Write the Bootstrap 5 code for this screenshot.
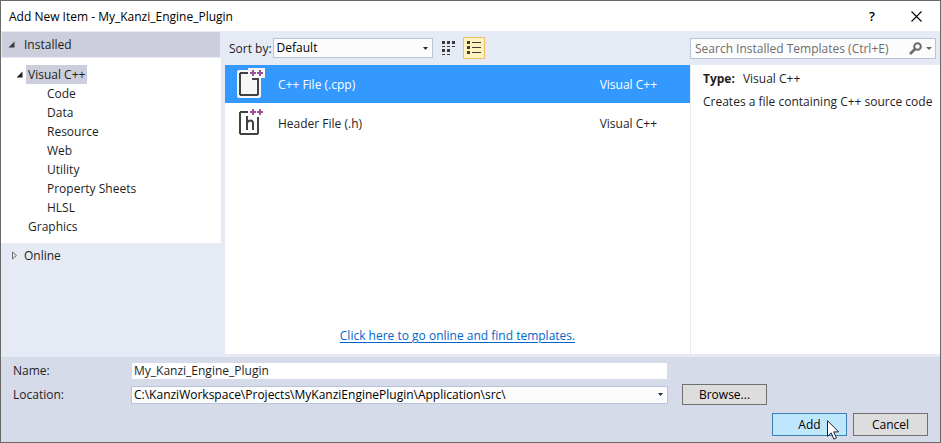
<!DOCTYPE html>
<html lang="en">
<head>
<meta charset="utf-8">
<meta name="viewport" content="width=device-width, initial-scale=1">
<title>Add New Item - My_Kanzi_Engine_Plugin</title>
<link href="https://cdn.jsdelivr.net/npm/bootstrap@5.3.0/dist/css/bootstrap.min.css" rel="stylesheet">
<style>
body { font-family: "Open Sans", "Noto Sans", sans-serif; font-size: 12px; line-height: 19px; color: #1e1e1e; }
.dialog { border: 1px solid #6b6868; background: #e6eaf5; }
.titlebar { height: 30px; background: #fff; padding: 0 16px 0 8px; color: #000; }
.win-btn { border: 0; background: none; padding: 0; width: 16px; height: 20px; color: #000; line-height: 20px; font-weight: 600; font-size: 13px; }
.win-btn.help { margin-right: 28px; }
.side { width: 220px; margin-right: 4px; }
.group-head { height: 25px; margin: 1px; padding-left: 6px; background: #cccedb; }
.group-online { height: 25px; padding-left: 7px; }
.twisty { width: 16px; flex: none; line-height: 0; }
.tree { background: #fff; padding: 7px 0; }
.tree ul { margin: 0; padding: 0; list-style: none; }
.tree .lvl1 { padding-left: 11px; }
.tree .lvl2 { padding-left: 46px; }
.tree .leaf { padding-left: 27px; }
.picked { background: #cccedb; padding: 0 2px; margin-left: -2px; }
.toolbar { height: 34px; padding: 0 4px; }
.sort-box, .loc-box { border: 1px solid #b9c3da; border-radius: 0; background-color: #fcfcfd; color: #000; font-size: 12px;
  --bs-form-select-bg-img: url("data:image/svg+xml,%3Csvg xmlns='http://www.w3.org/2000/svg' viewBox='0 0 5 3'%3E%3Cpath d='M0 0h5L2.5 3z' fill='%231b293e'/%3E%3C/svg%3E");
  background-position: right 4px center; background-size: 5px 3px; }
.sort-box { width: 160px; height: 20px; padding: 0 14px 0 3px; margin-left: 1px; line-height: 18px; }
.view-btn { width: 22px; height: 22px; padding: 0; border: 1px solid transparent; background: none; line-height: 0; display: flex; align-items: center; justify-content: center; margin-left: 5px; }
.view-btn.on { background: #fff2bf; border-color: #e5c365; margin-left: 3px; }
.search-wrap { width: 246px; height: 21px; border: 1px solid #b9c3da; background: #fcfcfd; padding: 0 3px 0 4px; }
.search-wrap input { border: 0; background: none; outline: 0; padding: 0; min-width: 0; line-height: 19px; }
.search-wrap input::placeholder { color: #6d6d6d; opacity: 1; }
.plain { border: 0; background: none; padding: 0; line-height: 0; }
.results { background: #fff; }
.tmpl { height: 38px; margin-bottom: 1px; padding: 0 33px 0 12px; border: 0; width: 100%; background: none; color: #1e1e1e; text-align: left; }
.tmpl.on { background: #3399ff; color: #fff; }
.tmpl svg { margin-right: 12px; flex: none; }
.online-link { color: #0066cc; text-decoration: underline; text-underline-offset: 2px; }
.more { padding-bottom: 9px; }
.info { width: 250px; background: #fff; border-left: 1px solid #e6eaf5; padding: 4px 0 4px 12px; }
.foot { background: #d6dbe9; margin-top: 3px; padding: 4px 12px 6px; }
.foot label { width: 118px; flex: none; }
.fields { width: 537px; }
.name-box { border: 0; border-radius: 0; background: #fff; height: 16px; padding: 0 2px; margin: 0 1px; color: #1e1e1e; line-height: 16px; font-size: 12px; width: calc(100% - 2px); }
.loc-box { height: 18px; padding: 0 14px 0 2px; line-height: 16px; }
.dlg-btn { height: 23px; width: 75px; border: 1px solid #707070; border-radius: 0; background: #ddd; color: #000; font-size: 12px; line-height: 19px; padding: 0; }
.dlg-btn.wide { width: 85px; height: 21px; margin-left: 14px; }
.dlg-btn.hot { background: #bee6fd; border-color: #3c7fb1; margin-right: 6px; }
.pointer { left: 54px; top: 6px; }
</style>
<script src="https://cdn.jsdelivr.net/npm/bootstrap@5.3.0/dist/js/bootstrap.bundle.min.js"></script>
</head>
<body>
<div class="dialog d-flex flex-column min-vh-100">
  <header class="titlebar d-flex align-items-center">
    <span class="me-auto">Add New Item - My_Kanzi_Engine_Plugin</span>
    <button class="win-btn help" type="button" aria-label="Help">?</button>
    <button class="win-btn d-flex align-items-center justify-content-center" type="button" aria-label="Close"><svg width="11" height="11" viewBox="0 0 11 11"><path d="M.5.5l10 10M10.5.5l-10 10" stroke="#000" stroke-width="1.1" fill="none"/></svg></button>
  </header>

  <main class="d-flex flex-grow-1">
    <nav class="side flex-shrink-0" aria-label="Template categories">
      <div class="group-head d-flex align-items-center"><span class="twisty"><svg width="7" height="7" viewBox="0 0 7 7"><path d="M6.5.5v6h-6z" fill="#3b3b40"/></svg></span>Installed</div>
      <div class="tree">
        <ul>
          <li class="lvl1 d-flex align-items-center"><span class="twisty ps-1"><svg width="7" height="7" viewBox="0 0 7 7"><path d="M6.5.5v6h-6z" fill="#1e1e1e"/></svg></span><span class="picked">Visual C++</span></li>
          <li>
            <ul>
              <li class="lvl2">Code</li>
              <li class="lvl2">Data</li>
              <li class="lvl2">Resource</li>
              <li class="lvl2">Web</li>
              <li class="lvl2">Utility</li>
              <li class="lvl2">Property Sheets</li>
              <li class="lvl2">HLSL</li>
            </ul>
          </li>
          <li class="leaf">Graphics</li>
        </ul>
      </div>
      <div class="group-online d-flex align-items-center"><span class="twisty ps-1"><svg width="6" height="9" viewBox="0 0 6 9"><path d="M.5 1v7L4.500 4.500z" stroke="#6d6d70" fill="none"/></svg></span>Online</div>
    </nav>

    <div class="d-flex flex-column flex-grow-1">
      <div class="toolbar d-flex align-items-center">
        <label for="sort">Sort by:</label>
        <select id="sort" class="form-select sort-box"><option>Default</option></select>
        <button class="view-btn" type="button" aria-label="Small icons"><svg width="13" height="14" viewBox="0 0 13 14" fill="#3b3b40" shape-rendering="crispEdges"><path d="M0 0h3v3H0zM5 0h3v3H5zM10 0h3v3h-3zM0 5h3v1H0zM5 5h3v1H5zM10 5h3v1h-3zM0 8h3v3H0zM5 8h3v3H5zM0 13h3v1H0zM5 13h3v1H5z"/></svg></button>
        <button class="view-btn on" type="button" aria-label="Medium icons"><svg width="14" height="14" viewBox="0 0 14 14" fill="#3b3b40" shape-rendering="crispEdges"><path d="M0 0h3v3H0zM0 5h3v3H0zM0 10h3v3H0zM5 1h9v1H5zM5 6h9v1H5zM5 11h9v1H5z"/></svg></button>
        <div class="search-wrap d-flex align-items-center ms-auto">
          <input class="flex-grow-1" type="text" aria-label="Search" placeholder="Search Installed Templates (Ctrl+E)">
          <button class="plain" type="button" aria-label="Search"><svg width="13" height="13" viewBox="0 0 13 13" fill="none" stroke="#6a6a6a"><circle cx="8.500" cy="4.500" r="3.300" stroke-width="2"/><path d="M6 7L1 12" stroke-width="2.600"/></svg></button>
          <button class="plain ms-1" type="button" aria-label="Search options"><svg width="6" height="3" viewBox="0 0 6 3"><path d="M0 0h6L3 3z" fill="#6a6a6a"/></svg></button>
        </div>
      </div>

      <div class="d-flex flex-grow-1">
        <section class="results flex-grow-1 d-flex flex-column">
          <button class="tmpl on d-flex align-items-center" type="button">
            <svg width="29" height="32" viewBox="0 0 29 32" shape-rendering="crispEdges"><path d="M1 2h10V0h17v10h-4v19h-1v1H1v-1H0V3h1z" fill="#f7f7f8"/><path d="M11 4H3v1H2v22h1v1h18v-1h1V10h-7v2h5v14H4V6h7z" fill="#424245"/><path d="M15 2h2v2h2v2h-2v2h-2V6h-2V4h2zM22 2h2v2h2v2h-2v2h-2V6h-2V4h2z" fill="#9b4f96"/></svg>
            <span class="flex-grow-1">C++ File (.cpp)</span><span>Visual C++</span>
          </button>
          <button class="tmpl d-flex align-items-center" type="button">
            <svg width="29" height="32" viewBox="0 0 29 32" shape-rendering="crispEdges"><path d="M11 4H3v1H2v22h1v1h18v-1h1V10h-2v16H4V6h7z" fill="#424245"/><path d="M15 2h2v2h2v2h-2v2h-2V6h-2V4h2zM22 2h2v2h2v2h-2v2h-2V6h-2V4h2z" fill="#9b4f96"/><path d="M10 9v14M10 16q1-2.500 3.500-2.500 2.500 0 2.500 3V23" fill="none" stroke="#424245" stroke-width="2" shape-rendering="auto"/></svg>
            <span class="flex-grow-1">Header File (.h)</span><span>Visual C++</span>
          </button>
          <div class="more mt-auto text-center"><a class="online-link" href="#">Click here to go online and find templates.</a></div>
        </section>
        <aside class="info flex-shrink-0">
          <div><b class="me-2">Type:</b>Visual C++</div>
          <div class="mt-1">Creates a file containing C++ source code</div>
        </aside>
      </div>
    </div>
  </main>

  <footer class="foot">
    <div class="d-flex align-items-center">
      <label for="name">Name:</label>
      <div class="fields"><input id="name" class="name-box d-block" type="text" value="My_Kanzi_Engine_Plugin"></div>
    </div>
    <div class="d-flex align-items-center mt-1">
      <label for="loc">Location:</label>
      <div class="fields"><select id="loc" class="form-select loc-box d-block"><option>C:\KanziWorkspace\Projects\MyKanziEnginePlugin\Application\src\</option></select></div>
      <button class="dlg-btn wide" type="button">Browse...</button>
    </div>
    <div class="d-flex justify-content-end mt-2">
      <button class="dlg-btn hot position-relative" type="button">Add<svg class="pointer position-absolute" width="13" height="20" viewBox="0 0 13 20"><path d="M.5.700v15.600l3.600-3.500 2.800 6.300 2.600-1.200-2.800-6h5z" fill="#fff" stroke="#1a2030"/></svg></button>
      <button class="dlg-btn" type="button">Cancel</button>
    </div>
  </footer>
</div>
</body>
</html>
